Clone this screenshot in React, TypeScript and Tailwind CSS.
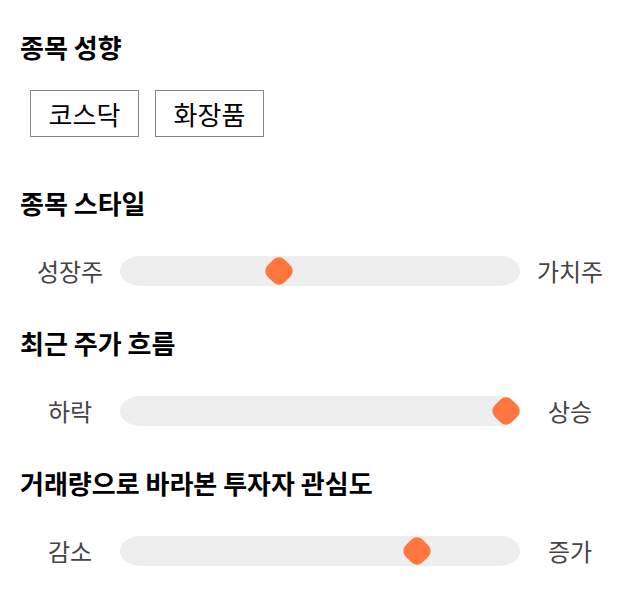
import React from 'react';

const font = { fontFamily: '"Noto Sans CJK KR", "Noto Sans", sans-serif' };

type SliderRow = {
  title: string;
  left: string;
  right: string;
  value: number;
};

const sliders: SliderRow[] = [
  { title: '종목 스타일', left: '성장주', right: '가치주', value: 0.39 },
  { title: '최근 주가 흐름', left: '하락', right: '상승', value: 1 },
  { title: '거래량으로 바라본 투자자 관심도', left: '감소', right: '증가', value: 0.76 },
];

const Heading = ({ children }: { children: React.ReactNode }) => (
  <h2 className="text-[26px] leading-[32px] font-bold text-black">{children}</h2>
);

const Slider = ({ row }: { row: SliderRow }) => (
  <div className="flex items-center h-[30px]">
    <span className="w-[100px] text-center text-[24px] leading-[30px] text-[#444]">{row.left}</span>
    <div className="relative w-[400px] h-[30px] bg-[#eeeeee] rounded-[20px/15px]">
      <div
        className="absolute top-[3px] w-[24px] h-[24px] -ml-[12px] rotate-45 rounded-[8px] bg-[#ff773f]"
        style={{ left: `${14 + row.value * 372}px` }}
      />
    </div>
    <span className="w-[100px] text-center text-[24px] leading-[30px] text-[#444]">{row.right}</span>
  </div>
);

export default function App() {
  return (
    <div className="w-[640px] h-[606px] bg-white px-5 pt-[31px]" style={font}>
      <Heading>종목 성향</Heading>
      <div className="flex gap-4 ml-[10px] mt-[27px]">
        {['코스닥', '화장품'].map((t) => (
          <div
            key={t}
            className="w-[109px] h-[47px] border border-[#888] flex items-center justify-center text-[26px] text-black"
          >
            {t}
          </div>
        ))}
      </div>
      <div className="mt-[50px]">
        {sliders.map((row, i) => (
          <div key={row.title} className={i > 0 ? 'mt-[41px]' : ''}>
            <Heading>{row.title}</Heading>
            <div className="mt-[37px]">
              <Slider row={row} />
            </div>
          </div>
        ))}
      </div>
    </div>
  );
}
